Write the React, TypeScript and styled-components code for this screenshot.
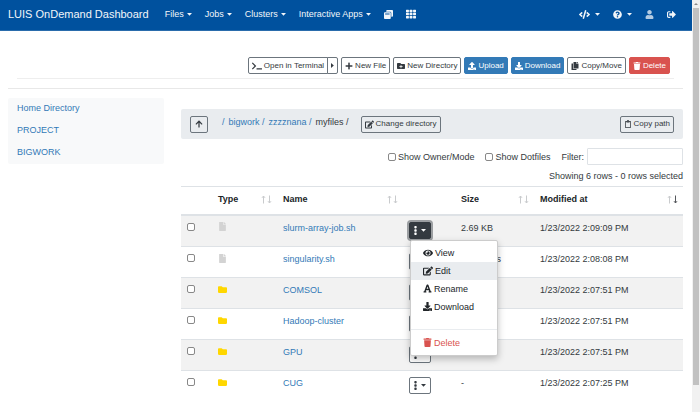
import React from 'react';
import styled, { createGlobalStyle, css } from 'styled-components';
import {
  FaArrowUp, FaCode, FaCopy, FaDownload, FaEdit, FaEye, FaFile, FaFolder, FaFolderPlus, FaFont, FaPlus,
  FaQuestionCircle, FaRegClipboard, FaSignOutAlt, FaTerminal, FaTh, FaTrash, FaUpload, FaUser, FaWindowRestore,
} from 'react-icons/fa';

const GlobalStyle = createGlobalStyle`
  *, *::before, *::after { box-sizing: border-box; }
  body {
    margin: 0;
    overflow: hidden;
    background: #fff;
    color: #343a40;
    font: 9px/14px "Liberation Sans", Arial, sans-serif;
  }
  button, input { font: inherit; color: inherit; margin: 0; }
  button { cursor: pointer; white-space: nowrap; }
  a { color: #337ab7; text-decoration: none; }
  svg { flex: none; }
`;

const Screen = styled.div`
  display: grid;
  grid-template-columns: minmax(0, 1fr) 8px;
  height: 100vh;
  overflow: hidden;
`;

const Page = styled.div`
  min-width: 0;
`;

const ScrollTrack = styled.div`
  display: flex;
  flex-direction: column;
  padding: 0 1px;
  background: #f1f1f1;
  &::after { content: ''; flex: 1; }
`;

const ScrollArrow = styled.div`
  height: 8px;
  display: flex;
  align-items: center;
  justify-content: center;
  &::after {
    content: '';
    border: 2px solid transparent;
    border-top: 0;
    border-bottom-color: #8a8a8a;
  }
`;

const ScrollThumb = styled.div`
  flex: 14;
  background: #c1c1c1;
`;

const Navbar = styled.nav`
  display: flex;
  align-items: center;
  height: 31px;
  padding: 0 16px 2px 8px;
  background: #00519e;
  border-bottom: 1px solid #2a6cac;
`;

const Brand = styled.a`
  color: #f2f6fa;
  font-size: 11px;
  margin-right: 16px;
`;

const NavGroup = styled.div<{ $end?: boolean }>`
  display: flex;
  align-items: center;
  gap: 13px;
  ${p => p.$end && css`margin-left: auto;`}
`;

const NavButton = styled.button<{ $dim?: boolean; $icon?: boolean }>`
  display: flex;
  align-items: center;
  gap: ${p => (p.$icon ? '5px' : '3px')};
  padding: 0;
  border: 0;
  background: none;
  color: ${p => (p.$dim ? '#b3cbe2' : '#f2f6fa')};
  line-height: 14px;
`;

const Content = styled.div`
  padding: 26px 9px 0 8px;
`;

const Toolbar = styled.div`
  display: flex;
  justify-content: flex-end;
  gap: 3px;
  margin: 0 9px 9px;
  padding: 0 4px 4px 0;
  border-bottom: 1px solid #eee;
`;

const tones = {
  outline: css`background: #fff; border-color: #6c757d; color: #343a40;`,
  muted: css`background: transparent; border-color: #6c757d; color: #343a40;`,
  primary: css`background: #337ab7; border-color: #337ab7; color: #fff;`,
  danger: css`background: #d9534f; border-color: #d9534f; color: #fff;`,
  active: css`
    background: #343a40;
    border-color: #343a40;
    color: #fff;
    box-shadow: 0 0 0 2px #9b9ea1;
  `,
};

const Button = styled.button<{ $tone?: keyof typeof tones; $spread?: boolean }>`
  display: inline-flex;
  align-items: center;
  justify-content: center;
  gap: ${p => (p.$spread ? '4px' : '2px')};
  height: 17px;
  padding: ${p => (p.$spread ? '0 4px' : '0 3px')};
  border: 1px solid;
  border-radius: 2px;
  font-size: 8px;
  line-height: 12px;
  ${p => tones[p.$tone ?? 'outline']}
`;

const SplitButton = styled.div`
  display: flex;
  & > :first-child { border-radius: 2px 0 0 2px; }
  & > :last-child { border-radius: 0 2px 2px 0; margin-left: -1px; padding: 0 3px; }
`;

const Body = styled.div`
  display: grid;
  grid-template-columns: minmax(0, 156fr) minmax(0, 502fr);
  column-gap: 17px;
  border-top: 1px solid #e8e8e8;
  padding-top: 9px;
`;

const Sidebar = styled.nav`
  align-self: start;
  display: flex;
  flex-direction: column;
  border-radius: 2px;
  background: #f8f9fa;
`;

const SideLink = styled.a`
  padding: 3px 9px 5px;
`;

const Main = styled.main`
  padding-top: 11px;
`;

const PathBar = styled.div`
  display: flex;
  align-items: center;
  height: 30px;
  padding: 0 9px;
  border-radius: 2px;
  background: #e9ecef;
`;

const Crumbs = styled.div`
  display: flex;
  gap: 4px;
  margin: 0 12px 4px 14px;
  flex: none;
`;

const PushRight = styled.div`
  margin-left: auto;
  display: flex;
`;

const Filters = styled.div`
  display: flex;
  justify-content: flex-end;
  align-items: center;
  gap: 11px;
  margin-top: 9px;
`;

const Label = styled.label`
  display: flex;
  align-items: center;
  gap: 2px;
`;

const Checkbox = styled.input.attrs({ type: 'checkbox' })`
  appearance: none;
  width: 8px;
  height: 8px;
  border: 1px solid #888;
  border-radius: 2px;
  background: #fff;
  display: block;
`;

const FilterInput = styled.input.attrs({ type: 'text' })`
  width: 96px;
  height: 17px;
  border: 1px solid #dee2e6;
  border-radius: 1px;
  margin-left: 1px;
  background: #fff;
`;

const Summary = styled.div`
  text-align: right;
  margin: 4px 0 3px;
`;

const Table = styled.table`
  width: 100%;
  table-layout: fixed;
  border-collapse: collapse;
`;

const HeadCell = styled.th`
  height: 28px;
  padding: 0 5px 2px 6px;
  border-top: 1px solid #dee2e6;
  border-bottom: 2px solid #dee2e6;
  text-align: left;
  color: #212529;
`;

const HeadInner = styled.div`
  display: flex;
  justify-content: space-between;
  align-items: center;
`;

const Row = styled.tr`
  height: 31px;
  border-top: 1px solid #dee2e6;
  &:nth-child(odd) { background: #f2f2f2; }
  &:first-child { height: 32px; }
`;

const Cell = styled.td`
  padding: 5px 6px;
  vertical-align: top;
  white-space: nowrap;
`;

const IconLine = styled.div`
  display: flex;
  align-items: center;
  height: 12px;
`;

const MenuAnchor = styled.div`
  position: relative;
  display: flex;
  padding-top: 1px;
`;

const Menu = styled.div`
  position: absolute;
  z-index: 2;
  top: 100%;
  left: 1px;
  width: 88px;
  margin-top: 1px;
  padding: 3px 0;
  border: 1px solid #ccc;
  border-radius: 2px;
  background: #fff;
  box-shadow: 0 3px 7px rgba(0, 0, 0, 0.25);
`;

const MenuItem = styled.button<{ $active?: boolean; $danger?: boolean }>`
  display: flex;
  align-items: center;
  gap: 2px;
  width: 100%;
  height: 18px;
  padding: 0 12px;
  border: 0;
  background: ${p => (p.$active ? '#e9ecef' : 'none')};
  color: ${p => (p.$danger ? '#d9534f' : '#212529')};
`;

const Divider = styled.hr`
  margin: 13px 0 4px;
  border: 0;
  border-top: 1px solid #e9ecef;
`;

function Caret() {
  return (
    <svg width="5" height="3" viewBox="0 0 5 3" fill="currentColor"><path d="M0 0H5L2.5 2.8Z" /></svg>
  );
}

function CaretSide() {
  return (
    <svg width="3" height="5" viewBox="0 0 3 5" fill="currentColor"><path d="M0 0V5L2.8 2.5Z" /></svg>
  );
}

function Dots() {
  return (
    <svg width="3" height="9" viewBox="0 0 3 9" fill="currentColor">
      <rect width="2.4" height="2.4" rx="0.8" x="0.3" />
      <rect width="2.4" height="2.4" rx="0.8" x="0.3" y="3.3" />
      <rect width="2.4" height="2.4" rx="0.8" x="0.3" y="6.6" />
    </svg>
  );
}

function SortMark({ down }: { down?: boolean }) {
  return (
    <svg width="11" height="9" viewBox="0 0 11 9" fill="none" strokeWidth="1">
      <path d="M2.5 8.5V1M1 2.8L2.5 1L4 2.8" stroke="#c9cbcd" />
      <path d="M8.5 0.5V8M7 6.2L8.5 8L10 6.2" stroke={down ? '#55585c' : '#c9cbcd'} />
    </svg>
  );
}

const columns: { label: string; width?: string; sort?: boolean; down?: boolean }[] = [
  { label: '', width: '31px' },
  { label: 'Type', width: '65px', sort: true },
  { label: 'Name', sort: true },
  { label: '', width: '52px' },
  { label: 'Size', width: '79px', sort: true },
  { label: 'Modified at', width: '149px', sort: true, down: true },
];

const files = [
  { name: 'slurm-array-job.sh', size: '2.69 KB', date: '1/23/2022 2:09:09 PM', file: true, open: true },
  { name: 'singularity.sh', size: '391 Bytes', date: '1/23/2022 2:08:08 PM', file: true },
  { name: 'COMSOL', size: '-', date: '1/23/2022 2:07:51 PM' },
  { name: 'Hadoop-cluster', size: '-', date: '1/23/2022 2:07:51 PM' },
  { name: 'GPU', size: '-', date: '1/23/2022 2:07:51 PM' },
  { name: 'CUG', size: '-', date: '1/23/2022 2:07:25 PM' },
];

function RowMenu() {
  return (
    <Menu role="menu">
      <MenuItem role="menuitem"><FaEye size={10} />View</MenuItem>
      <MenuItem role="menuitem" $active><FaEdit size={10} />Edit</MenuItem>
      <MenuItem role="menuitem"><FaFont size={9} />Rename</MenuItem>
      <MenuItem role="menuitem"><FaDownload size={9} />Download</MenuItem>
      <Divider />
      <MenuItem role="menuitem" $danger><FaTrash size={9} />Delete</MenuItem>
    </Menu>
  );
}

export default function App() {
  return (
    <>
      <GlobalStyle />
      <Screen>
        <Page>
          <Navbar>
            <Brand href="#">LUIS OnDemand Dashboard</Brand>
            <NavGroup>
              {['Files', 'Jobs', 'Clusters', 'Interactive Apps'].map(name => (
                <NavButton key={name}>{name}<Caret /></NavButton>
              ))}
              <NavButton aria-label="My Interactive Sessions"><FaWindowRestore size={9} /></NavButton>
              <NavButton aria-label="All Apps"><FaTh size={10} /></NavButton>
            </NavGroup>
            <NavGroup $end>
              <NavButton $icon aria-label="Develop"><FaCode size={11} /><Caret /></NavButton>
              <NavButton $icon aria-label="Help"><FaQuestionCircle size={9} /><Caret /></NavButton>
              <NavButton $icon aria-label="User" $dim><FaUser size={9} /></NavButton>
              <NavButton $icon aria-label="Log Out"><FaSignOutAlt size={9} /></NavButton>
            </NavGroup>
          </Navbar>
          <Content>
            <Toolbar>
              <SplitButton>
                <Button><FaTerminal size={10} />Open in Terminal</Button>
                <Button aria-label="Choose terminal"><CaretSide /></Button>
              </SplitButton>
              <Button><FaPlus size={8} />New File</Button>
              <Button><FaFolderPlus size={8} />New Directory</Button>
              <Button $tone="primary"><FaUpload size={8} />Upload</Button>
              <Button $tone="primary"><FaDownload size={8} />Download</Button>
              <Button><FaCopy size={8} />Copy/Move</Button>
              <Button $tone="danger"><FaTrash size={8} />Delete</Button>
            </Toolbar>
            <Body>
              <Sidebar>
                <SideLink href="#">Home Directory</SideLink>
                <SideLink href="#">PROJECT</SideLink>
                <SideLink href="#">BIGWORK</SideLink>
              </Sidebar>
              <Main>
                <PathBar>
                  <Button $tone="muted" $spread aria-label="Up"><FaArrowUp size={8} /></Button>
                  <Crumbs>
                    <a href="#">/</a>
                    <a href="#">bigwork /</a>
                    <a href="#">zzzznana /</a>
                    <span>myfiles /</span>
                  </Crumbs>
                  <Button $tone="muted"><FaEdit size={9} />Change directory</Button>
                  <PushRight><Button $tone="muted"><FaRegClipboard size={8} />Copy path</Button></PushRight>
                </PathBar>
                <Filters>
                  <Label><Checkbox />Show Owner/Mode</Label>
                  <Label><Checkbox />Show Dotfiles</Label>
                  <Label>Filter:<FilterInput /></Label>
                </Filters>
                <Summary>Showing 6 rows - 0 rows selected</Summary>
                <Table>
                  <colgroup>
                    {columns.map((c, i) => <col key={i} width={c.width} />)}
                  </colgroup>
                  <thead>
                    <tr>
                      {columns.map((c, i) => (
                        <HeadCell key={i}>
                          <HeadInner>{c.label}{c.sort && <SortMark down={c.down} />}</HeadInner>
                        </HeadCell>
                      ))}
                    </tr>
                  </thead>
                  <tbody>
                    {files.map(f => (
                      <Row key={f.name}>
                        <Cell><IconLine><Checkbox aria-label={`Select ${f.name}`} /></IconLine></Cell>
                        <Cell>
                          <IconLine>
                            {f.file ? <FaFile size={9} color="#d3d3d3" /> : <FaFolder size={9} color="#ffd700" />}
                          </IconLine>
                        </Cell>
                        <Cell><a href="#">{f.name}</a></Cell>
                        <Cell>
                          <MenuAnchor>
                            <Button $spread $tone={f.open ? 'active' : 'outline'} aria-label={`Actions for ${f.name}`}>
                              <Dots /><Caret />
                            </Button>
                            {f.open && <RowMenu />}
                          </MenuAnchor>
                        </Cell>
                        <Cell>{f.size}</Cell>
                        <Cell>{f.date}</Cell>
                      </Row>
                    ))}
                  </tbody>
                </Table>
              </Main>
            </Body>
          </Content>
        </Page>
        <ScrollTrack aria-hidden="true">
          <ScrollArrow />
          <ScrollThumb />
        </ScrollTrack>
      </Screen>
    </>
  );
}
